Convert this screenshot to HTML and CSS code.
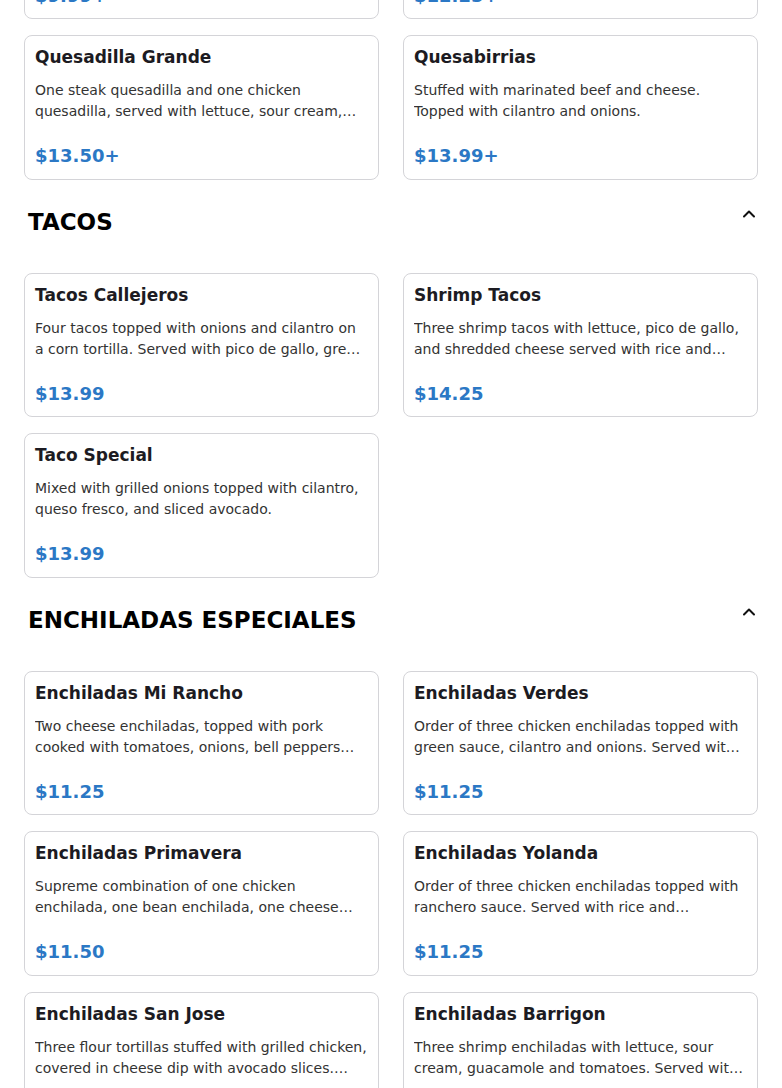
FILE: index.html
```html
<!DOCTYPE html>
<html lang="en">
<head>
  <meta charset="UTF-8">
  <meta name="viewport" content="width=device-width, initial-scale=1.0">
  <title>Menu - Mi Rancho</title>
  <link rel="stylesheet" href="styles.css">
</head>
<body>
  <main class="menu">
    <!-- end of the quesadillas section, scrolled partly out of view -->
    <section class="section section-cut">
      <div class="grid">
        <div class="card">
          <h3 class="card-title">Quesadilla Fajita</h3>
          <p class="card-desc">Grilled steak or chicken quesadilla with onions and bell peppers.</p>
          <div class="card-price">$9.99+</div>
        </div>
        <div class="card">
          <h3 class="card-title">Quesadilla Rellena</h3>
          <p class="card-desc">Large flour tortilla stuffed with cheese and your choice of meat.</p>
          <div class="card-price">$12.25+</div>
        </div>
        <div class="card">
          <h3 class="card-title">Quesadilla Grande</h3>
          <p class="card-desc">One steak quesadilla and one chicken quesadilla, served with lettuce, sour cream, guacamole and pico de gallo.</p>
          <div class="card-price">$13.50+</div>
        </div>
        <div class="card">
          <h3 class="card-title">Quesabirrias</h3>
          <p class="card-desc">Stuffed with marinated beef and cheese. Topped with cilantro and onions.</p>
          <div class="card-price">$13.99+</div>
        </div>
      </div>
    </section>

    <section class="section">
      <div class="section-head">
        <h2>TACOS</h2>
        <button class="toggle" aria-label="Collapse">
          <svg viewBox="0 0 14 14" fill="none"><polyline points="2,9.5 7,4.5 12,9.5" stroke="currentColor" stroke-width="2" stroke-linecap="round" stroke-linejoin="round"/></svg>
        </button>
      </div>
      <div class="grid">
        <div class="card">
          <h3 class="card-title">Tacos Callejeros</h3>
          <p class="card-desc">Four tacos topped with onions and cilantro on a corn tortilla. Served with pico de gallo, green sauce and lime.</p>
          <div class="card-price">$13.99</div>
        </div>
        <div class="card">
          <h3 class="card-title">Shrimp Tacos</h3>
          <p class="card-desc">Three shrimp tacos with lettuce, pico de gallo, and shredded cheese served with rice and beans.</p>
          <div class="card-price">$14.25</div>
        </div>
        <div class="card">
          <h3 class="card-title">Taco Special</h3>
          <p class="card-desc">Mixed with grilled onions topped with cilantro, queso fresco, and sliced avocado.</p>
          <div class="card-price">$13.99</div>
        </div>
      </div>
    </section>

    <section class="section">
      <div class="section-head">
        <h2>ENCHILADAS ESPECIALES</h2>
        <button class="toggle" aria-label="Collapse">
          <svg viewBox="0 0 14 14" fill="none"><polyline points="2,9.5 7,4.5 12,9.5" stroke="currentColor" stroke-width="2" stroke-linecap="round" stroke-linejoin="round"/></svg>
        </button>
      </div>
      <div class="grid">
        <div class="card">
          <h3 class="card-title">Enchiladas Mi Rancho</h3>
          <p class="card-desc">Two cheese enchiladas, topped with pork cooked with tomatoes, onions, bell peppers and special sauce.</p>
          <div class="card-price">$11.25</div>
        </div>
        <div class="card">
          <h3 class="card-title">Enchiladas Verdes</h3>
          <p class="card-desc">Order of three chicken enchiladas topped with green sauce, cilantro and onions. Served with rice and beans.</p>
          <div class="card-price">$11.25</div>
        </div>
        <div class="card">
          <h3 class="card-title">Enchiladas Primavera</h3>
          <p class="card-desc">Supreme combination of one chicken enchilada, one bean enchilada, one cheese enchilada and one beef enchilada.</p>
          <div class="card-price">$11.50</div>
        </div>
        <div class="card">
          <h3 class="card-title">Enchiladas Yolanda</h3>
          <p class="card-desc">Order of three chicken enchiladas topped with ranchero sauce. Served with rice and guacamole salad.</p>
          <div class="card-price">$11.25</div>
        </div>
        <div class="card">
          <h3 class="card-title">Enchiladas San Jose</h3>
          <p class="card-desc">Three flour tortillas stuffed with grilled chicken, covered in cheese dip with avocado slices. Served with rice.</p>
          <div class="card-price">$12.50</div>
        </div>
        <div class="card">
          <h3 class="card-title">Enchiladas Barrigon</h3>
          <p class="card-desc">Three shrimp enchiladas with lettuce, sour cream, guacamole and tomatoes. Served with rice.</p>
          <div class="card-price">$14.99</div>
        </div>
      </div>
    </section>
  </main>
</body>
</html>
```

FILE: styles.css
```css
* {
  margin: 0;
  padding: 0;
  box-sizing: border-box;
}

body {
  font-family: 'DejaVu Sans', Verdana, sans-serif;
  background-color: #ffffff;
  color: #1c1b22;
  overflow: hidden;
}

/* page is scrolled: the quesadillas section sits partly above the fold */
.menu {
  padding: 0 24px;
  margin-top: -125.3px;
}

.section {
  padding-top: 26px;
}

.section-cut {
  padding-top: 0;
}

.section-head {
  display: flex;
  justify-content: space-between;
  align-items: flex-start;
  height: 32px;
  margin-bottom: 35px;
  padding-left: 4px;
}

.section-head h2 {
  font-size: 23px;
  font-weight: 700;
  line-height: 32px;
  color: #000000;
}

.toggle {
  width: 18px;
  height: 18px;
  margin-top: -1px;
  border: none;
  background: transparent;
  color: #111111;
  display: flex;
  align-items: center;
  justify-content: center;
  cursor: pointer;
}

.toggle svg {
  width: 14px;
  height: 14px;
}

.grid {
  display: grid;
  grid-template-columns: 1fr 1fr;
  column-gap: 24px;
  row-gap: 16px;
}

.card {
  border: 1px solid #d4d4d8;
  border-radius: 8px;
  padding: 10px 10px 10.5px;
  background-color: #ffffff;
}

.card-title {
  font-size: 17px;
  font-weight: 700;
  line-height: 22px;
  color: #1c1b22;
  margin-bottom: 12px;
}

.card-desc {
  font-size: 14px;
  line-height: 21px;
  color: #333333;
  height: 42px;
  display: -webkit-box;
  -webkit-line-clamp: 2;
  -webkit-box-orient: vertical;
  overflow: hidden;
}

.card-price {
  margin-top: 22px;
  font-size: 18px;
  font-weight: 700;
  line-height: 24px;
  color: #2b78c5;
}
```
